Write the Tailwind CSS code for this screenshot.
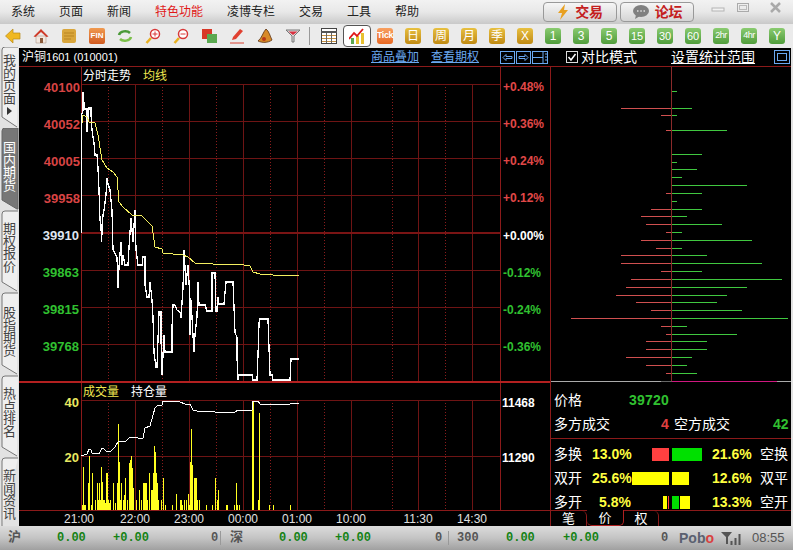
<!DOCTYPE html>
<html lang="zh">

<head>
    <meta charset="UTF-8">
    <title>沪铜1601</title>
    <script src="https://cdn.jsdelivr.net/npm/@tailwindcss/browser@4"></script>
</head>

<body class="w-[793px] h-[550px] overflow-hidden flex flex-col bg-[#e2e2e2] text-[12px] font-['Liberation_Sans','Noto_Sans_CJK_SC',sans-serif]">
    <!-- menu -->
    <div class="h-[24px] flex items-center pl-[11px] bg-linear-to-b from-[#f2f2f2] via-[#e8e8e8] to-[#c9c9c9] text-[#222]">
        <div class="flex gap-[24px]">
            <span>系统</span><span>页面</span><span>新闻</span>
            <span class="text-[#e01818]">特色功能</span>
            <span>凌博专栏</span><span>交易</span><span>工具</span><span>帮助</span>
        </div>
        <div class="ml-[124px] w-[74px] h-[20px] rounded-[4px] border border-[#999] bg-linear-to-b from-[#f6f6f6] to-[#d4d4d4] flex items-center justify-center gap-[6px] text-[14px] font-bold text-[#c42020]">
            <svg width="12" height="16" viewBox="0 0 12 16"><path d="M8 0L1 9h4l-2 7 8-10H7z" fill="#e8a020" /></svg>
            <span>交易</span>
        </div>
        <div class="ml-[3px] w-[74px] h-[20px] rounded-[4px] border border-[#999] bg-linear-to-b from-[#f6f6f6] to-[#d4d4d4] flex items-center justify-center gap-[5px] text-[14px] font-bold text-[#c42020]">
            <svg width="18" height="14" viewBox="0 0 18 14"><ellipse cx="9" cy="6" rx="8" ry="6" fill="#808080" /><path d="M4 10l-1 4 5-3z" fill="#808080" /><path d="M5 6h1.500M8.300 6h1.500M11.500 6h1.500" stroke="#ddd" stroke-width="1.500" /></svg>
            <span>论坛</span>
        </div>
        <div class="ml-[17px] flex items-start self-start pt-[2px] gap-[11px]">
            <svg width="14" height="12" viewBox="0 0 14 12"><rect x="1" y="6" width="12" height="3" fill="#f2f2f2" stroke="#b4b4b4" /></svg>
            <svg width="14" height="12" viewBox="0 0 14 12"><rect x="1.500" y="1.500" width="11" height="8" fill="none" stroke="#aaa" /><rect x="3.500" y="3.500" width="7" height="4" fill="none" stroke="#bbb" /></svg>
            <svg class="ml-[8px]" width="13" height="12" viewBox="0 0 13 12"><path d="M2 1l9 9M11 1l-9 9" stroke="#aaa" stroke-width="2.500" /></svg>
        </div>
    </div>

    <!-- toolbar -->
    <div class="h-[24px] pl-[5px] flex items-center gap-[12px] bg-[#ebebeb] text-white">
        <svg class="w-4 h-4" viewBox="0 0 16 16"><path d="M8 1L0.500 8 8 15v-4h7V5H8z" fill="#f0b820" stroke="#b88a18" stroke-width="0.700" /></svg>
        <svg class="w-4 h-4" viewBox="0 0 16 16"><path d="M3 8h10v7H3z" fill="#f2e8e0" stroke="#a08878" stroke-width="0.500" /><path d="M0.500 8.500L8 1l7.500 7.500-2 0.500L8 4 2.500 9z" fill="#cf3a28" /><rect x="7" y="10" width="3" height="5" fill="#8a5a3a" /></svg>
        <svg class="w-4 h-4" viewBox="0 0 16 16"><rect x="1" y="1" width="14" height="14" rx="2" fill="#d9a63c" /><path d="M3 5h10M3 8h10M3 11h7" stroke="#b98420" /></svg>
        <div class="w-4 h-4 rounded-[2px] bg-linear-to-b from-[#f09a50] to-[#d05a20] flex items-center justify-center text-[8px] font-bold">FIN</div>
        <svg class="w-4 h-4" viewBox="0 0 16 16" fill="none"><path d="M2 7c1-4 8-5 11-2" stroke="#4a9a38" stroke-width="2.500" /><path d="M14 9c-1 4-8 5-11 2" stroke="#7cc04a" stroke-width="2.500" /></svg>
        <svg class="w-4 h-4" viewBox="0 0 16 16" fill="none"><path d="M6 10L1.500 15" stroke="#e8b020" stroke-width="2.500" /><circle cx="10" cy="6" r="4.500" fill="#fff" stroke="#d83838" stroke-width="1.500" /><path d="M7.500 6h5M10 3.500v5" stroke="#d83838" /></svg>
        <svg class="w-4 h-4" viewBox="0 0 16 16" fill="none"><path d="M6 10L1.500 15" stroke="#e8b020" stroke-width="2.500" /><circle cx="10" cy="6" r="4.500" fill="#fff" stroke="#d83838" stroke-width="1.500" /><path d="M7.500 6h5" stroke="#d83838" /></svg>
        <svg class="w-4 h-4" viewBox="0 0 16 16"><rect x="1" y="1" width="10" height="10" fill="#d83828" /><rect x="6" y="6" width="10" height="9" fill="#5aa850" /></svg>
        <svg class="w-4 h-4" viewBox="0 0 16 16" fill="none"><path d="M3 12l1-3 7-8 3 2-7 8z" fill="#e04030" /><path d="M1 15h14" stroke="#d84030" /></svg>
        <svg class="w-4 h-4" viewBox="0 0 16 16"><path d="M9 1c3 2 4 7 6 11-4 3-10 3-14 1 4-3 5-9 8-12z" fill="#d88a28" stroke="#5a3010" stroke-width="0.800" /><circle cx="7" cy="11" r="2" fill="#b83818" /></svg>
        <svg class="w-4 h-4" viewBox="0 0 16 16" fill="none"><path d="M1 2h14L9 8v6H7V8z" fill="#ddd" stroke="#777" /><path d="M3.500 3.500h9L8 7z" fill="#d83040" /></svg>
        <div class="w-px h-[18px] ml-[-4px] mr-[-1px] bg-[#999]"></div>
        <svg class="w-4 h-4" viewBox="0 0 16 16"><rect x="0.500" y="0.500" width="15" height="15" fill="#fff" stroke="#444" /><path d="M0 4h16" stroke="#555" stroke-width="2" /><path d="M1 7.500h14M1 10.500h14M1 13.500h14" stroke="#c89040" /><path d="M5.500 5v10M10.500 5v10" stroke="#666" /></svg>
        <div class="w-[28px] h-[22px] mx-[-6px] rounded-[4px] border border-[#555] bg-white flex items-center justify-center">
            <svg class="w-4 h-4" viewBox="0 0 16 16" fill="none"><rect x="2" y="10" width="3" height="6" fill="#5aa850" /><rect x="7" y="8" width="3" height="8" fill="#e8c030" /><rect x="12" y="5" width="3" height="11" fill="#e8c030" /><path d="M0 11l5-6 3 3 6-7" stroke="#e01818" stroke-width="1.800" /></svg>
        </div>
        <div class="w-4 h-4 rounded-[3px] bg-linear-to-b from-[#f8a060] to-[#e86820] flex items-center justify-center text-[9px] font-bold tracking-tighter">Tick</div>
        <div class="w-4 h-4 rounded-[3px] bg-linear-to-b from-[#e8c040] to-[#c08a10] flex items-center justify-center">日</div>
        <div class="w-4 h-4 rounded-[3px] bg-linear-to-b from-[#e8c040] to-[#c08a10] flex items-center justify-center">周</div>
        <div class="w-4 h-4 rounded-[3px] bg-linear-to-b from-[#e8c040] to-[#c08a10] flex items-center justify-center">月</div>
        <div class="w-4 h-4 rounded-[3px] bg-linear-to-b from-[#e8c040] to-[#c08a10] flex items-center justify-center">季</div>
        <div class="w-4 h-4 rounded-[3px] bg-linear-to-b from-[#e8c040] to-[#c08a10] flex items-center justify-center">X</div>
        <div class="w-4 h-4 rounded-[3px] bg-linear-to-b from-[#8acb70] to-[#4f9c3a] flex items-center justify-center">1</div>
        <div class="w-4 h-4 rounded-[3px] bg-linear-to-b from-[#8acb70] to-[#4f9c3a] flex items-center justify-center">3</div>
        <div class="w-4 h-4 rounded-[3px] bg-linear-to-b from-[#8acb70] to-[#4f9c3a] flex items-center justify-center">5</div>
        <div class="w-4 h-4 rounded-[3px] bg-linear-to-b from-[#8acb70] to-[#4f9c3a] flex items-center justify-center text-[11px]">15</div>
        <div class="w-4 h-4 rounded-[3px] bg-linear-to-b from-[#8acb70] to-[#4f9c3a] flex items-center justify-center text-[11px]">30</div>
        <div class="w-4 h-4 rounded-[3px] bg-linear-to-b from-[#8acb70] to-[#4f9c3a] flex items-center justify-center text-[11px]">60</div>
        <div class="w-4 h-4 rounded-[3px] bg-linear-to-b from-[#8acb70] to-[#4f9c3a] flex items-center justify-center text-[9px] tracking-tighter">2hr</div>
        <div class="w-4 h-4 rounded-[3px] bg-linear-to-b from-[#8acb70] to-[#4f9c3a] flex items-center justify-center text-[9px] tracking-tighter">4hr</div>
        <div class="w-4 h-4 rounded-[3px] bg-linear-to-b from-[#8acb70] to-[#4f9c3a] flex items-center justify-center">Y</div>
    </div>

    <div class="h-[478px] flex">
        <!-- side tabs -->
        <div class="w-[19px] flex flex-col text-[13px] leading-[12.5px] text-[#444]">
            <div class="relative h-[80px] pt-[7px] text-center">
                <svg class="absolute left-0 top-[-1px]" width="19" height="82"><path d="M18 0H5Q2 0 2 3V70L17 80" fill="#efefef" stroke="#777" /></svg>
                <div class="relative w-[13px] ml-[3px]">我的页面</div>
                <svg class="relative ml-[7px] mt-[2px]" width="5" height="8"><path d="M0 0l5 4-5 4z" fill="#333" /></svg>
            </div>
            <div class="relative h-[82px] pt-[14px]">
                <svg class="absolute left-0 top-0" width="19" height="82"><path d="M18 0H5Q2 0 2 3V72L17 81H18z" fill="#777" stroke="#666" /></svg>
                <div class="relative w-[13px] ml-[3px] text-white">国内期货</div>
            </div>
            <div class="relative h-[82px] pt-[13px]">
                <svg class="absolute left-0 top-0" width="19" height="82"><path d="M18 1H5Q2 1 2 4V72L17 81" fill="#efefef" stroke="#777" /></svg>
                <div class="relative w-[13px] ml-[3px]">期权报价</div>
            </div>
            <div class="relative h-[83px] pt-[15px]">
                <svg class="absolute left-0 top-0" width="19" height="83"><path d="M18 1H5Q2 1 2 4V73L17 82" fill="#efefef" stroke="#777" /></svg>
                <div class="relative w-[13px] ml-[3px]">股指期货</div>
            </div>
            <div class="relative h-[82px] pt-[13px]">
                <svg class="absolute left-0 top-0" width="19" height="82"><path d="M18 1H5Q2 1 2 4V72L17 81" fill="#efefef" stroke="#777" /></svg>
                <div class="relative w-[13px] ml-[3px]">热点排名</div>
            </div>
            <div class="relative h-[69px] pt-[13px]">
                <svg class="absolute left-0 top-0" width="19" height="69"><path d="M18 1H5Q2 1 2 4V69" fill="#efefef" stroke="#777" /></svg>
                <div class="relative w-[13px] ml-[3px]">新闻资讯</div>
            </div>
        </div>

        <div class="w-[772px] bg-black flex flex-col text-white">
            <!-- header -->
            <div class="h-[19px] flex items-center border-b border-[#8b1a1a]">
                <span class="w-[352px] pl-[3px]">沪铜<span class="text-[11px]">1601 (010001)</span></span>
                <span class="text-[#6aa8f0] underline">商品叠加</span>
                <span class="ml-[12px] text-[#6aa8f0] underline">查看期权</span>
                <div class="ml-[21px] flex gap-px">
                    <svg width="15" height="13"><rect x="0.500" y="0.500" width="14" height="12" fill="none" stroke="#6aa8f0" /><path d="M3 6.500l3-3v2h6v2H6v2z" fill="none" stroke="#6aa8f0" /></svg>
                    <svg width="15" height="13"><rect x="0.500" y="0.500" width="14" height="12" fill="none" stroke="#6aa8f0" /><path d="M12 6.500l-3-3v2H3v2h6v2z" fill="none" stroke="#6aa8f0" /></svg>
                    <svg width="16" height="13"><rect x="0.500" y="0.500" width="15" height="12" fill="none" stroke="#6aa8f0" /><path d="M0 6.500h11M11 0v13M13 3h2M13 6h2M13 9h2" stroke="#6aa8f0" /></svg>
                </div>
                <svg class="ml-[18px]" width="12" height="12" viewBox="0 0 12 12"><rect x="0.500" y="0.500" width="11" height="11" fill="none" stroke="#ddd" /><path d="M2.500 6l2.500 3 4.500-6" fill="none" stroke="#fff" stroke-width="1.500" /></svg>
                <span class="ml-[3px] text-[14px]">对比模式</span>
                <span class="ml-[34px] text-[14px] underline">设置统计范围</span>
                <svg class="ml-[19px]" width="16" height="14"><rect x="0.500" y="0.500" width="15" height="13" fill="none" stroke="#6aa8f0" /><rect x="3.500" y="3.500" width="9" height="7" fill="none" stroke="#6aa8f0" /></svg>
            </div>

            <div class="h-[459px] flex">
                <!-- intraday chart -->
                <svg class="w-[531px] h-[459px] shrink-0" viewBox="19 67 531 459">
                    <g shape-rendering="crispEdges" fill="none">
                        <path d="M108.500 84V382M162.500 84V382M216.500 84V382M270.500 84V382M324.500 84V382M392.500 84V382M445.500 84V382M108.500 400V510M162.500 400V510M216.500 400V510M270.500 400V510M324.500 400V510M392.500 400V510M445.500 400V510" stroke="#8a1c1c" stroke-dasharray="1 2" />
                        <path d="M81 84.500H500M81 121.500H500M81 158.500H500M81 195.500H500M81 270.500H500M81 307.500H500M81 344.500H500M81 400.500H500M81 456.500H500M135.500 84V382M189.500 84V382M243.500 84V382M297.500 84V382M351.500 84V382M418.500 84V382M472.500 84V382M135.500 400V510M189.500 400V510M243.500 400V510M297.500 400V510M351.500 400V510M418.500 400V510M472.500 400V510" stroke="#6e1414" />
                        <path d="M81 233H500" stroke="#7a1414" stroke-width="2" />
                        <path d="M81.500 67V510M500.500 67V510M19 510.500H550" stroke="#8b1a1a" />
                        <path d="M19 382H550" stroke="#b32020" stroke-width="2" />
                    </g>
                    <path id="volumeBars" fill="none" stroke="#ffff20" shape-rendering="crispEdges" />
                    <g fill="none" shape-rendering="crispEdges">
                        <path d="M81.500 233V115L83 110V92L84 104L85 109H87V132L88 120L89 108H91V115L92 130L94 143L95 155H97L98 168L99 190L100 220L101 225L101.500 242L103 215L104 210L106 195L107 178L108 184L110 190L112 210L113 250L117 257L118 288L119 267L121 242L122 265L123 255L125 265H128L129 248L131 218L133 242L135 210L136 250L138 265H142L143 257H145V285L147 297H149L150 282L152 300L153 317L154 353L156 367H157L159 312H161V338L162 375L163 355L164 335L165 352H172V328L173 305H175L177 310L180 312L181 318L183 288L184 250L186 285L188 265L190 300V335L191 300L192 317L193 335L194 352L195 335L197 317L198 282L199 305H205L207 311H212V273H215L216 311H217L218 297L219 304H224L226 282H233L234 307L235 333L237 337V357L238 380L239 375H252L253 380H257L258 355L259 323L260 319H268L269 348L270 375H272L273 380H290L291 359H299" stroke="#fff" stroke-width="1.300" />
                        <path d="M82 123L83 115L87 117L89 122L95 123L98 135L102 160L107 168L113 172L117 177L119 202L123 207L132 215L142 216L152 226L155 247L162 249L163 253L183 255L188 257L195 263L213 264L237 264L250 266L253 272L260 274L273 275L299 276" stroke="#f4f060" />
                        <path d="M81 456L87 454L89 449L91 450L92 453L99 454L102 448H103L106 451L110 452L115 447L118 442L126 441L129 438L135 437L138 438L143 438L145 428L150 426L153 415L155 408L158 405H162L163 401H170L180 402L185 404H190L193 410L197 411H213L217 413L223 412H235L238 410H252L253 401H258L260 404H290L293 403H299" stroke="#fff" />
                    </g>

                    <g class="text-[13px] font-bold" text-anchor="end">
                        <text x="80" y="92" class="fill-[#d84444]">40100</text>
                        <text x="80" y="129" class="fill-[#d84444]">40052</text>
                        <text x="80" y="166" class="fill-[#d84444]">40005</text>
                        <text x="80" y="203" class="fill-[#d84444]">39958</text>
                        <text x="79" y="240" class="fill-[#dfe6f0]">39910</text>
                        <text x="79" y="277" class="fill-[#30c030]">39863</text>
                        <text x="79" y="314" class="fill-[#30c030]">39815</text>
                        <text x="79" y="351" class="fill-[#30c030]">39768</text>
                        <text x="79" y="407" class="fill-[#e8e860]">40</text>
                        <text x="79" y="462" class="fill-[#e8e860]">20</text>
                    </g>
                    <g class="text-[12px] font-bold">
                        <text x="503" y="91" class="fill-[#e04848]">+0.48%</text>
                        <text x="503" y="128" class="fill-[#e04848]">+0.36%</text>
                        <text x="503" y="165" class="fill-[#e04848]">+0.24%</text>
                        <text x="503" y="202" class="fill-[#e04848]">+0.12%</text>
                        <text x="503" y="240" class="fill-white">+0.00%</text>
                        <text x="503" y="277" class="fill-[#30c030]">-0.12%</text>
                        <text x="503" y="314" class="fill-[#30c030]">-0.24%</text>
                        <text x="503" y="351" class="fill-[#30c030]">-0.36%</text>
                        <text x="502" y="407" class="fill-white">11468</text>
                        <text x="502" y="462" class="fill-white">11290</text>
                    </g>
                    <g class="text-[12px]">
                        <text x="83" y="80" class="fill-white">分时走势</text>
                        <text x="143" y="80" class="fill-[#f0e850]">均线</text>
                        <text x="83" y="396" class="fill-[#f0e850]">成交量</text>
                        <text x="131" y="396" class="fill-white">持仓量</text>
                    </g>
                    <g class="text-[12px] fill-[#e0e0e0]" text-anchor="middle">
                        <text x="79" y="523">21:00</text>
                        <text x="135" y="523">22:00</text>
                        <text x="189" y="523">23:00</text>
                        <text x="243" y="523">00:00</text>
                        <text x="297" y="523">01:00</text>
                        <text x="351" y="523">10:00</text>
                        <text x="418" y="523">11:30</text>
                        <text x="472" y="523">14:30</text>
                    </g>
                </svg>

                <div class="w-[241px] flex flex-col">
                    <!-- order distribution -->
                    <svg class="w-[241px] h-[315px] shrink-0" viewBox="550 67 241 315">
                        <g shape-rendering="crispEdges" fill="none">
                            <path d="M550.500 67V382" stroke="#8b1a1a" />
                            <path id="askBars" stroke="#d05050" />
                            <path id="bidBars" stroke="#40c840" />
                            <path d="M671.500 67V381" stroke="#8b2a2a" stroke-width="1.500" />
                            <path d="M551 381.500H791" stroke="#aaa" />
                            <path d="M661 381.500H672" stroke="#666" />
                            <path d="M672 381.500H777" stroke="#d01880" />
                        </g>
                    </svg>

                    <!-- trade summary -->
                    <div class="h-[144px] border-l border-[#8b1a1a] flex flex-col text-[14px]">
                        <div class="h-[24px] mt-[7px] pl-[3px] flex items-center">
                            <span class="w-[75px]">价格</span>
                            <span class="font-bold text-[#30c030] tracking-[0.2px]">39720</span>
                        </div>
                        <div class="h-[24px] pl-[3px] flex items-center">
                            <span class="w-[107px]">多方成交</span>
                            <span class="w-[7px] font-bold text-[#e04040]">4</span>
                            <span class="ml-[6px] w-[99px]">空方成交</span>
                            <span class="font-bold text-[#30c030]">42</span>
                        </div>
                        <div class="h-[73px] mt-[2px] pt-[3px] border-t border-[#8b1a1a] overflow-hidden">
                            <div class="h-[24px] pl-[3px] flex items-center">
                                <span class="w-[38px]">多换</span>
                                <span class="w-[39px] text-right font-bold text-[#ffff40]">13.0%</span>
                                <div class="w-[81px] h-[13px] flex">
                                    <div class="w-[38px] flex justify-end"><div class="w-[17px] bg-[#ff4040]"></div></div>
                                    <div class="ml-[3px] w-[30px] bg-[#00e000]"></div>
                                </div>
                                <span class="w-[38px] font-bold text-[#ffff40]">21.6%</span>
                                <span class="ml-[10px]">空换</span>
                            </div>
                            <div class="h-[24px] pl-[3px] flex items-center">
                                <span class="w-[38px]">双开</span>
                                <span class="w-[39px] text-right font-bold text-[#ffff40]">25.6%</span>
                                <div class="w-[81px] h-[13px] flex">
                                    <div class="w-[38px] flex justify-end"><div class="w-[37px] bg-[#ffff00]"></div></div>
                                    <div class="ml-[3px] w-[17px] bg-[#ffff00]"></div>
                                </div>
                                <span class="w-[38px] font-bold text-[#ffff40]">12.6%</span>
                                <span class="ml-[10px]">双平</span>
                            </div>
                            <div class="h-[24px] pl-[3px] flex items-center">
                                <span class="w-[38px]">多开</span>
                                <span class="w-[39px] text-right font-bold text-[#ffff40]">5.8%</span>
                                <div class="w-[81px] h-[13px] flex">
                                    <div class="w-[38px] flex justify-end">
                                        <div class="w-[4px] bg-[#ffff00]"></div>
                                        <div class="ml-px w-[1px] bg-[#ff4040]"></div>
                                    </div>
                                    <div class="ml-[3px] w-[7px] bg-[#00e000]"></div>
                                    <div class="ml-px w-[10px] bg-[#ffff00]"></div>
                                </div>
                                <span class="w-[38px] font-bold text-[#ffff40]">13.3%</span>
                                <span class="ml-[10px]">空开</span>
                            </div>
                        </div>
                        <div class="h-[16px] flex border-t border-[#8b1a1a] text-[13px] leading-[15px]">
                            <div class="w-[36px] text-center border-r border-[#8b1a1a] rounded-tr-[5px]">笔</div>
                            <div class="w-[37px] h-[16px] -mt-px text-center border-b border-r border-[#b02020] rounded-b-[5px] bg-black">价</div>
                            <div class="w-[35px] text-center border-r border-[#8b1a1a] rounded-tr-[5px]">权</div>
                        </div>
                    </div>
                </div>
            </div>
        </div>
    </div>

    <!-- status bar -->
    <div class="h-[24px] flex items-center bg-linear-to-b from-[#dcdcdc] via-[#c4c4c4] to-[#a0a0a0] text-[12px] font-bold font-['Liberation_Mono','Noto_Sans_CJK_SC',monospace] text-[#555]">
        <span class="ml-[8px] w-[49px] text-[13px]">沪</span>
        <span class="w-[56px] text-[#148214]">0.00</span>
        <span class="w-[98px] text-[#148214]">+0.00</span>
        <span class="w-[9px]">0</span>
        <span class="w-px h-[14px] mr-[9px] bg-[#999]"></span>
        <span class="w-[49px] text-[13px]">深</span>
        <span class="w-[56px] text-[#148214]">0.00</span>
        <span class="w-[100px] text-[#148214]">+0.00</span>
        <span class="w-[13px]">0</span>
        <span class="w-px h-[14px] mr-[8px] bg-[#999]"></span>
        <span class="w-[49px]">300</span>
        <span class="w-[57px] text-[#148214]">0.00</span>
        <span class="w-[98px] text-[#148214]">+0.00</span>
        <span class="w-[18px]">0</span>
        <span class="w-[42px] text-[14px] font-['Liberation_Sans',sans-serif] text-[#5a6070]">Pob<span class="text-[#d84040]">o</span></span>
        <svg class="shrink-0" width="21" height="14" viewBox="0 0 21 14"><path d="M0 1h11L7 6v7H5V6z" fill="#555" /><path d="M10.500 10v4M14.500 7v7M18.500 3v11" stroke="#555" stroke-width="2" /></svg>
        <span class="ml-[10px] text-[13px] font-normal font-['Liberation_Sans',sans-serif] text-[#555]">08:55</span>
    </div>

    <script>
        // [x, top of bar], bars stand on y = 510
        const volumes = [[82, 505], [83, 467], [84, 505], [85, 505], [88, 483], [89, 456], [91, 505], [92, 473], [95, 500], [97, 483], [98, 500], [99, 483], [100, 500], [101, 467], [102, 482], [103, 500], [104, 500], [105, 503], [106, 473], [107, 473], [108, 500], [109, 503], [110, 500], [113, 483], [115, 503], [117, 483], [118, 424], [119, 462], [120, 500], [121, 483], [123, 500], [124, 495], [125, 478], [127, 500], [129, 463], [130, 460], [131, 456], [132, 468], [133, 488], [136, 500], [139, 490], [141, 500], [143, 483], [144, 483], [145, 483], [146, 483], [147, 500], [149, 473], [151, 490], [152, 490], [153, 473], [154, 446], [155, 452], [156, 473], [157, 483], [158, 500], [161, 500], [163, 478], [165, 505], [172, 505], [176, 494], [180, 500], [181, 500], [182, 505], [184, 500], [186, 500], [188, 494], [189, 505], [190, 462], [191, 429], [192, 465], [194, 478], [195, 478], [196, 478], [197, 500], [199, 500], [206, 505], [212, 505], [215, 478], [217, 500], [218, 490], [226, 505], [227, 505], [234, 505], [236, 483], [237, 505], [239, 505], [252, 401], [253, 401], [259, 413], [258, 500], [269, 505], [273, 505], [290, 505]];
        document.getElementById('volumeBars').setAttribute('d', volumes.map(([x, top]) => `M${x + 0.5} ${top}V510`).join(''));

        // [y, left end, right end]
        const depth = [[91, 671, 677], [108, 621, 692], [115, 661, 677], [130, 666, 727], [154, 671, 702], [162, 671, 677], [169, 671, 697], [177, 671, 682], [185, 671, 747], [193, 666, 702], [201, 671, 677], [209, 651, 702], [216, 641, 687], [224, 646, 722], [232, 666, 682], [240, 641, 752], [248, 656, 682], [255, 621, 707], [263, 621, 762], [271, 661, 702], [279, 631, 782], [287, 626, 747], [295, 616, 727], [302, 636, 717], [310, 651, 742], [318, 571, 788], [326, 661, 687], [334, 666, 737], [341, 646, 707], [349, 646, 707], [357, 626, 692], [365, 646, 687], [373, 666, 697]];
        document.getElementById('askBars').setAttribute('d', depth.map(([y, l]) => `M${l} ${y + 0.5}H671`).join(''));
        document.getElementById('bidBars').setAttribute('d', depth.map(([y, , r]) => `M672 ${y + 0.5}H${r}`).join(''));
    </script>
</body>

</html>
